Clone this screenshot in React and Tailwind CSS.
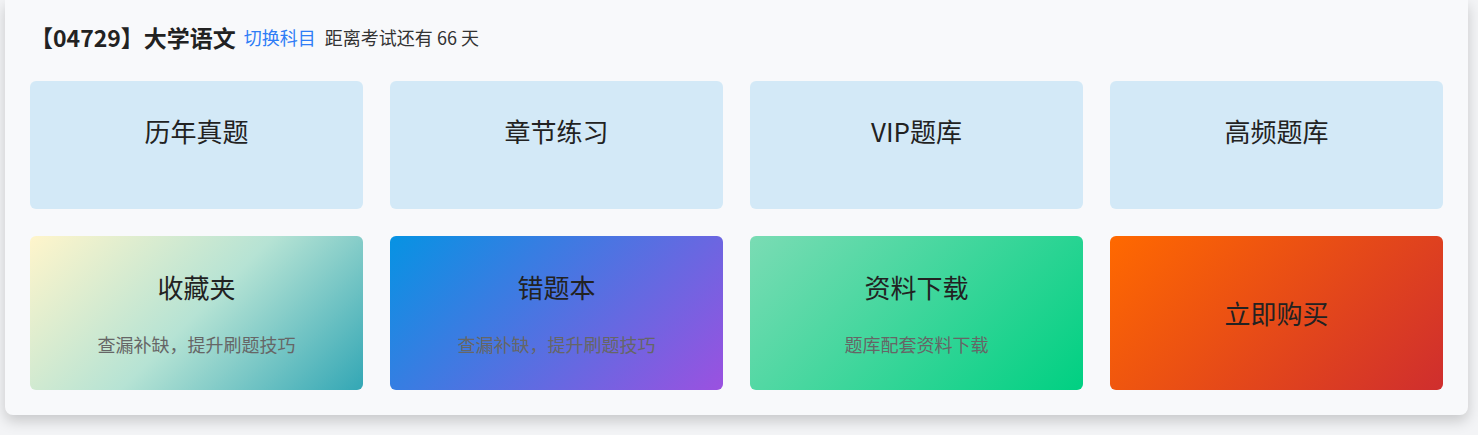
import React from "react";

const topCards = ["历年真题", "章节练习", "VIP题库", "高频题库"];

const bottomCards = [
  {
    title: "收藏夹",
    desc: "查漏补缺，提升刷题技巧",
    bg: "bg-[linear-gradient(135deg,#fff5cb_0%,#b6e3d4_50%,#33a7b5_100%)]",
  },
  {
    title: "错题本",
    desc: "查漏补缺，提升刷题技巧",
    bg: "bg-[linear-gradient(135deg,#0693e3_0%,#9b51e0_100%)]",
  },
  {
    title: "资料下载",
    desc: "题库配套资料下载",
    bg: "bg-[linear-gradient(135deg,#7adcb4_0%,#00d082_100%)]",
  },
];

const App = () => {
  return (
    <div
      className="min-h-[435px] bg-[#f3f4f6] pr-[10px] pl-[5px] pb-[20px]"
      style={{ fontFamily: '"Noto Sans CJK SC", "Noto Sans", sans-serif' }}
    >
      <div className="bg-[#f8f9fb] rounded-b-lg shadow-[0_6px_14px_rgba(0,0,0,0.18)] px-[25px] pt-[22px] pb-[25px]">
        {/* Header */}
        <div className="flex items-center h-[30px] mb-[29px] text-[#222]">
          <span className="text-[23px] font-bold leading-[30px]">【04729】大学语文</span>
          <button className="ml-[8px] text-[18px] text-[#2f7df6]">切换科目</button>
          <span className="ml-[9px] text-[18px] text-[#333]">距离考试还有 66 天</span>
        </div>

        {/* Main entries */}
        <div className="grid grid-cols-4 gap-[27px]">
          {topCards.map((t) => (
            <div
              key={t}
              className="h-[128px] rounded-md bg-[#d3e9f7] pt-[34px] text-center text-[26px] leading-[32px] text-[#222]"
            >
              {t}
            </div>
          ))}
        </div>

        <div className="grid grid-cols-4 gap-[27px] mt-[27px]">
          {bottomCards.map((c) => (
            <div
              key={c.title}
              className={`h-[154px] rounded-md ${c.bg} pt-[35px] flex flex-col items-center`}
            >
              <div className="text-[26px] leading-[32px] text-[#222]">{c.title}</div>
              <div className="mt-[29px] text-[18px] leading-[24px] text-[#666]">{c.desc}</div>
            </div>
          ))}
          <div className="h-[154px] rounded-md bg-[linear-gradient(135deg,#ff6900_0%,#cf2e2e_100%)] flex items-center justify-center">
            <div className="text-[26px] leading-[32px] text-[#222]">立即购买</div>
          </div>
        </div>
      </div>
    </div>
  );
};

export default App;
